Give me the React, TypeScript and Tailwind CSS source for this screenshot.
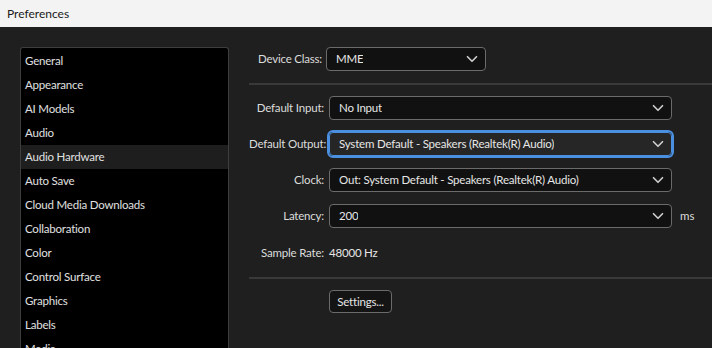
import { ChevronDown } from 'lucide-react';

const sections = [
  'General',
  'Appearance',
  'AI Models',
  'Audio',
  'Audio Hardware',
  'Auto Save',
  'Cloud Media Downloads',
  'Collaboration',
  'Color',
  'Control Surface',
  'Graphics',
  'Labels',
  'Media',
];

const font = { fontFamily: 'Lato, "Noto Sans", sans-serif' };

function Select({ value, focused, className }: { value: string; focused?: boolean; className?: string }) {
  return (
    <div
      className={
        'flex items-center justify-between h-[24px] rounded-[4px] pl-[9px] pr-[4px] text-[11.5px] tracking-[-0.2px] text-[#e6e6e6] ' +
        (focused
          ? 'bg-[#262626] outline-2 outline-[#4a8fe0] border border-[#4a8fe0] '
          : 'bg-[#111111] border border-[#6b6b6b] ') +
        (className ?? '')
      }
    >
      <span className="truncate">{value}</span>
      <ChevronDown className="w-[18px] h-[18px] text-[#cfcfcf] shrink-0" strokeWidth={2.2} />
    </div>
  );
}

function Row({ label, children }: { label: string; children: React.ReactNode }) {
  return (
    <div className="flex items-center h-[24px]">
      <div className="w-[80px] shrink-0 text-right text-[11.5px] tracking-[-0.2px] text-[#dcdcdc] pr-[5px] whitespace-nowrap">
        {label}
      </div>
      {children}
    </div>
  );
}

export default function App() {
  return (
    <div className="w-[712px] h-[348px] overflow-hidden flex flex-col bg-[#1f1f1f]" style={font}>
      <div className="h-[27px] bg-[#f3f3f3] flex items-center pl-[7px] text-[12px] text-[#1a1a1a] shrink-0">
        Preferences
      </div>
      <div className="flex flex-1 min-h-0">
        <div className="ml-[20px] mt-[20px] w-[209px] shrink-0 rounded-t-[3px] border border-b-0 border-[#3e3e3e] bg-black pt-[1px] overflow-hidden">
          {sections.map((s) => (
            <div
              key={s}
              className={
                'h-[24px] flex items-center pl-[4px] text-[11.5px] tracking-[-0.2px] text-[#e0e0e0] whitespace-nowrap ' +
                (s === 'Audio Hardware' ? 'bg-[#1e1e1e]' : '')
              }
            >
              {s}
            </div>
          ))}
        </div>
        <div className="flex-1 ml-[20px] flex flex-col">
          <div className="mt-[20px] flex items-center h-[24px]">
            <div className="w-[77px] shrink-0 text-right pr-[4px] text-[11.5px] tracking-[-0.2px] text-[#dcdcdc] whitespace-nowrap">
              Device Class:
            </div>
            <Select value="MME" className="w-[160px]" />
          </div>
          <div className="mt-[12px] h-[2px] bg-[#393939]" />
          <div className="mt-[11px] flex flex-col gap-[12px]">
            <Row label="Default Input:">
              <Select value="No Input" className="w-[343px]" />
            </Row>
            <Row label="Default Output:">
              <Select value="System Default - Speakers (Realtek(R) Audio)" focused className="w-[343px]" />
            </Row>
            <Row label="Clock:">
              <Select value="Out: System Default - Speakers (Realtek(R) Audio)" className="w-[343px]" />
            </Row>
            <Row label="Latency:">
              <Select value="200" className="w-[343px]" />
              <span className="ml-[8px] text-[11.5px] text-[#dcdcdc]">ms</span>
            </Row>
          </div>
          <div className="mt-[13px]">
            <Row label="Sample Rate:">
              <span className="text-[11.5px] tracking-[-0.2px] text-[#e6e6e6]">48000 Hz</span>
            </Row>
          </div>
          <div className="mt-[12px] h-[2px] bg-[#393939]" />
          <div className="mt-[9px] pl-[80px]">
            <button className="h-[23px] w-[63px] rounded-[4px] border border-[#6b6b6b] bg-[#141414] text-[11.5px] tracking-[-0.2px] text-[#e6e6e6]">
              Settings...
            </button>
          </div>
        </div>
      </div>
    </div>
  );
}
